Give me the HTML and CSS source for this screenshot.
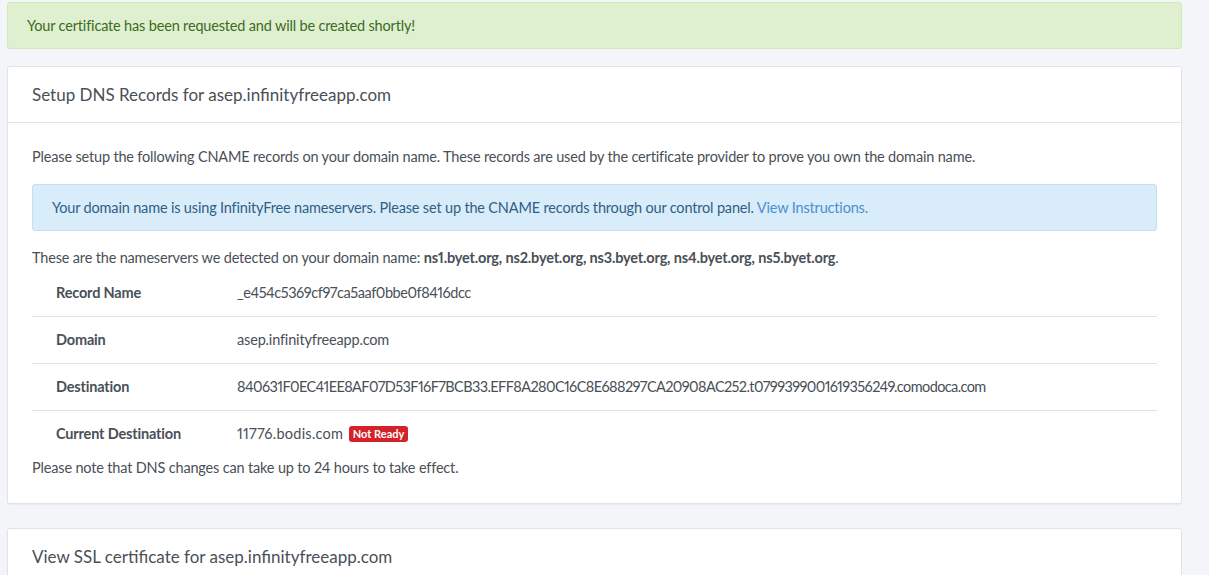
FILE: index.html
```html
<!DOCTYPE html>
<html>
<head>
<meta charset="utf-8">
<link rel="stylesheet" href="styles.css">
</head>
<body>
<div class="content">
  <div class="alert alert-success">Your certificate has been requested and will be created shortly!</div>

  <div class="card">
    <div class="card-header">Setup DNS Records for asep.infinityfreeapp.com</div>
    <div class="card-body">
      <p class="lead-p">Please setup the following CNAME records on your domain name. These records are used by the certificate provider to prove you own the domain name.</p>
      <div class="alert alert-info">Your domain name is using InfinityFree nameservers. Please set up the CNAME records through our control panel. <a href="#" class="link">View Instructions.</a></div>
      <p class="plain">These are the nameservers we detected on your domain name: <b>ns1.byet.org, ns2.byet.org, ns3.byet.org, ns4.byet.org, ns5.byet.org</b>.</p>
      <table class="records">
        <tr><td class="label">Record Name</td><td><span class="hash">_e454c5369cf97ca5aaf0bbe0f8416dcc</span></td></tr>
        <tr><td class="label">Domain</td><td>asep.infinityfreeapp.com</td></tr>
        <tr><td class="label">Destination</td><td><span class="hash long">840631F0EC41EE8AF07D53F16F7BCB33.EFF8A280C16C8E688297CA20908AC252.t0799399001619356249.comodoca.com</span></td></tr>
        <tr><td class="label">Current Destination</td><td><span class="host">11776.bodis.com</span> <span class="badge">Not Ready</span></td></tr>
      </table>
      <p class="plain">Please note that DNS changes can take up to 24 hours to take effect.</p>
    </div>
  </div>

  <div class="card">
    <div class="card-header">View SSL certificate for asep.infinityfreeapp.com</div>
    <div class="card-body">
      <p class="plain">&nbsp;</p>
    </div>
  </div>
</div>
</body>
</html>
```

FILE: styles.css
```css
html, body {
  margin: 0;
  padding: 0;
  background: #f4f5f9;
}
body {
  font-family: Lato, "Open Sans", sans-serif;
  font-size: 14.5px;
  letter-spacing: -0.17px;
  line-height: 22px;
  color: #495057;
  font-variant-numeric: proportional-nums;
}
.content {
  padding: 2px 27px 0 7px;
}
.alert {
  border: 1px solid transparent;
  border-radius: 3px;
}
.alert-success {
  background: #dff0d0;
  border-color: #d0e8bd;
  color: #3d6a1e;
  padding: 11.5px 19px;
  margin-bottom: 17px;
}
.alert-info {
  background: #d9ecf9;
  border-color: #c3e0f3;
  color: #2f5f86;
  padding: 11.5px 19px;
  margin-bottom: 16px;
}
.link {
  color: #4b8fd2;
  text-decoration: none;
}
.card {
  background: #fff;
  border: 1px solid #dfe3ea;
  border-radius: 3px;
  box-shadow: 0 1px 1px rgba(0, 0, 0, 0.04);
  margin-bottom: 24px;
}
.card-header {
  padding: 14px 24px;
  font-size: 17px;
  letter-spacing: 0;
  line-height: 27px;
  border-bottom: 1px solid #dfe3ea;
  color: #495057;
}
.card-body {
  padding: 23px 24px 24px;
}
.lead-p {
  margin: 0 0 16px;
}
.plain {
  margin: 0;
}
b {
  font-weight: 700;
}
.records {
  width: 100%;
  border-collapse: collapse;
}
.records td {
  padding: 12px 24px;
  text-align: left;
  vertical-align: top;
  border-top: 1px solid #dee2e6;
}
.records tr:first-child td {
  border-top-color: transparent;
}
.records td.label {
  width: 157px;
  font-weight: 700;
  white-space: nowrap;
}
.records td:last-child {
  padding-left: 0;
}
.hash {
  letter-spacing: -0.45px;
}
.hash.long {
  letter-spacing: -0.6px;
}
.host {
  letter-spacing: 0.25px;
}
.badge {
  display: inline-block;
  margin-left: 2px;
  background: #d3222a;
  color: #fff;
  font-size: 11px;
  font-weight: 700;
  letter-spacing: 0;
  line-height: 12px;
  padding: 2px 4px;
  border-radius: 3px;
  vertical-align: 1px;
}
```
